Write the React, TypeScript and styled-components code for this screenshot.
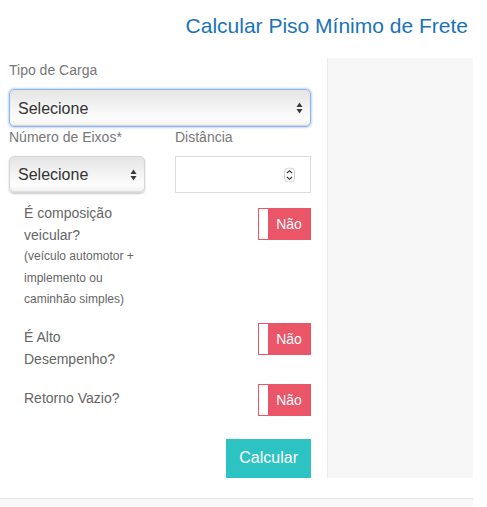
import React from "react";
import styled, { createGlobalStyle } from "styled-components";

const GlobalStyle = createGlobalStyle`
  html, body {
    margin: 0;
    padding: 0;
    background: #fff;
  }
  body {
    font-family: "Liberation Sans", Arial, sans-serif;
  }
`;

const Page = styled.div`
  width: 473px;
`;

const Title = styled.h2`
  margin: 14px 5px 0 0;
  font-size: 21px;
  line-height: 24px;
  font-weight: 400;
  color: #1a73b9;
  text-align: right;
`;

const Body = styled.div`
  display: flex;
  align-items: stretch;
  gap: 16px;
  margin-top: 20px;
  padding-left: 9px;
`;

const Form = styled.form`
  width: 302px;
  padding-top: 2px;
`;

const Side = styled.aside`
  flex: 1;
  background: #f7f7f7;
  border-left: 1px solid #ececec;
`;

const Label = styled.label`
  display: block;
  margin-bottom: 9px;
  font-size: 14px;
  line-height: 20px;
  color: #777;
`;

const Cols = styled.div`
  display: grid;
  grid-template-columns: 136px 136px;
  column-gap: 30px;
`;

const SelectWrap = styled.div<{ $focused?: boolean }>`
  position: relative;
  height: ${(p) => (p.$focused ? 38 : 37)}px;
  border-radius: 5px;
  border: 1px solid ${(p) => (p.$focused ? "#8fb5e6" : "#d6d6d6")};
  box-sizing: border-box;
  background: linear-gradient(#e4e4e4, #f3f3f3 45%, #fdfdfd 80%, #f1f1f1);
  box-shadow: ${(p) =>
    p.$focused
      ? "0 0 2px 1px rgba(120, 165, 225, 0.45), inset 0 -1px 1px rgba(0,0,0,0.12)"
      : "0 1px 2px rgba(0, 0, 0, 0.22), inset 0 -1px 1px rgba(0,0,0,0.08)"};
`;

const Select = styled.select`
  appearance: none;
  width: 100%;
  height: 100%;
  border: 0;
  outline: none;
  background: transparent;
  padding: 0 0 0 8px;
  font-family: "Liberation Sans", Arial, sans-serif;
  font-size: 16px;
  color: #333;
`;

const Overlay = styled.span`
  position: absolute;
  right: 7px;
  top: 50%;
  transform: translateY(-50%);
  display: flex;
  pointer-events: none;
`;

const NumberWrap = styled.div`
  position: relative;
  height: 37px;
  border: 1px solid #dcdcdc;
  box-sizing: border-box;
  background: #fff;
`;

const NumberInput = styled.input`
  appearance: textfield;
  width: 100%;
  height: 100%;
  border: 0;
  outline: none;
  padding: 0 8px;
  box-sizing: border-box;
  background: transparent;
  font-size: 16px;
  &::-webkit-inner-spin-button,
  &::-webkit-outer-spin-button {
    -webkit-appearance: none;
    margin: 0;
  }
`;

const SpinOverlay = styled(Overlay)`
  right: 15px;
`;

const ToggleRow = styled.div<{ $top: number; $labelTop: number; $switchTop: number }>`
  display: flex;
  justify-content: space-between;
  align-items: flex-start;
  margin-top: ${(p) => p.$top}px;
  padding-left: 15px;

  & > div:first-child {
    padding-top: ${(p) => p.$labelTop}px;
  }
  & > button {
    margin-top: ${(p) => p.$switchTop}px;
  }
`;

const LabelCol = styled.div`
  flex: none;
  width: 122px;
`;

const ToggleLabel = styled.div`
  font-size: 14px;
  line-height: 22px;
  color: #666;
`;

const Hint = styled.div`
  font-size: 12px;
  line-height: 21.5px;
  color: #666;
`;

const Switch = styled.button`
  flex: none;
  display: flex;
  width: 53px;
  height: 32px;
  padding: 0;
  border: 1px solid #ea5568;
  background: #ea5568;
  box-sizing: border-box;
  cursor: pointer;
`;

const Knob = styled.span`
  width: 9px;
  height: 100%;
  background: #fff;
`;

const SwitchText = styled.span`
  flex: 1;
  align-self: center;
  text-align: center;
  font-family: "Liberation Sans", Arial, sans-serif;
  font-size: 14px;
  color: #fff;
`;

const Actions = styled.div`
  display: flex;
  justify-content: flex-end;
  margin-top: 23px;
`;

const Submit = styled.button`
  height: 39px;
  padding: 0 13px;
  border: 0;
  background: #2ec3c3;
  color: #fff;
  font-family: "Liberation Sans", Arial, sans-serif;
  font-size: 16px;
  cursor: pointer;
`;

const Footer = styled.footer`
  margin-top: 20px;
  height: 9px;
  border-top: 1px solid #e2e2e2;
  background: #f8f8f8;
`;

const SelectArrows = () => (
  <svg width="7" height="12" viewBox="0 0 7 12">
    <path d="M3.5 0.5 L6.5 5 L0.5 5 Z" fill="#3a3a3a" />
    <path d="M3.5 11.5 L6.5 7 L0.5 7 Z" fill="#3a3a3a" />
  </svg>
);

const Spinner = () => (
  <svg width="11" height="15" viewBox="0 0 11 15">
    <rect x="0.5" y="0.5" width="10" height="14" rx="4" fill="#fff" stroke="#d0d0d0" />
    <path d="M3 5.5 L5.5 3.2 L8 5.5" fill="none" stroke="#333" strokeWidth="1.1" />
    <path d="M3 9.5 L5.5 11.8 L8 9.5" fill="none" stroke="#333" strokeWidth="1.1" />
  </svg>
);

const Toggle = () => (
  <Switch type="button">
    <Knob />
    <SwitchText>Não</SwitchText>
  </Switch>
);

export default function App() {
  return (
    <Page>
      <GlobalStyle />
      <Title>Calcular Piso Mínimo de Frete</Title>
      <Body>
        <Form onSubmit={(e) => e.preventDefault()}>
          <Label>Tipo de Carga</Label>
          <SelectWrap $focused>
            <Select defaultValue="">
              <option value="">Selecione</option>
            </Select>
            <Overlay>
              <SelectArrows />
            </Overlay>
          </SelectWrap>

          <Cols>
            <div>
              <Label>Número de Eixos*</Label>
              <SelectWrap>
                <Select defaultValue="">
                  <option value="">Selecione</option>
                </Select>
                <Overlay>
                  <SelectArrows />
                </Overlay>
              </SelectWrap>
            </div>
            <div>
              <Label>Distância</Label>
              <NumberWrap>
                <NumberInput type="number" />
                <SpinOverlay>
                  <Spinner />
                </SpinOverlay>
              </NumberWrap>
            </div>
          </Cols>

          <ToggleRow $top={9} $labelTop={0} $switchTop={6}>
            <LabelCol>
              <ToggleLabel>É composição veicular?</ToggleLabel>
              <Hint>(veículo automotor + implemento ou caminhão simples)</Hint>
            </LabelCol>
            <Toggle />
          </ToggleRow>

          <ToggleRow $top={12} $labelTop={3} $switchTop={0}>
            <LabelCol>
              <ToggleLabel>É Alto Desempenho?</ToggleLabel>
            </LabelCol>
            <Toggle />
          </ToggleRow>

          <ToggleRow $top={14} $labelTop={3} $switchTop={0}>
            <LabelCol>
              <ToggleLabel>Retorno Vazio?</ToggleLabel>
            </LabelCol>
            <Toggle />
          </ToggleRow>

          <Actions>
            <Submit type="submit">Calcular</Submit>
          </Actions>
        </Form>
        <Side />
      </Body>
      <Footer />
    </Page>
  );
}
